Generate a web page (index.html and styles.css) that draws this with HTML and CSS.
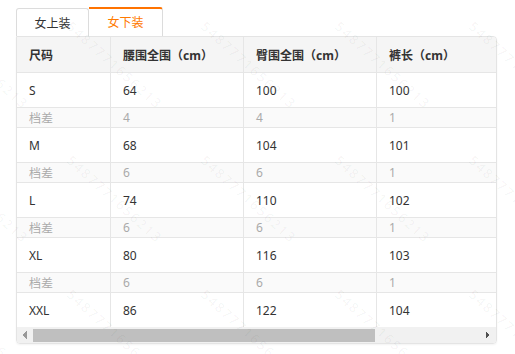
FILE: index.html
```html
<!DOCTYPE html>
<html lang="zh-CN">
<head>
<meta charset="utf-8">
<title>尺码表</title>
<link rel="stylesheet" href="styles.css">
</head>
<body>
<div class="page">
  <div class="tabs">
    <div class="tab">女上装</div>
    <div class="tab active">女下装</div>
  </div>
  <div class="panel">
    <div class="scroll">
      <table class="size-table">
        <colgroup>
          <col class="c-size">
          <col class="c-val">
          <col class="c-val">
          <col class="c-val">
          <col class="c-val">
        </colgroup>
        <thead>
          <tr><th>尺码</th><th>腰围全围（cm）</th><th>臀围全围（cm）</th><th>裤长（cm）</th><th></th></tr>
        </thead>
        <tbody>
          <tr class="row"><td>S</td><td>64</td><td>100</td><td>100</td><td></td></tr>
          <tr class="diff"><td>档差</td><td>4</td><td>4</td><td>1</td><td></td></tr>
          <tr class="row"><td>M</td><td>68</td><td>104</td><td>101</td><td></td></tr>
          <tr class="diff"><td>档差</td><td>6</td><td>6</td><td>1</td><td></td></tr>
          <tr class="row"><td>L</td><td>74</td><td>110</td><td>102</td><td></td></tr>
          <tr class="diff"><td>档差</td><td>6</td><td>6</td><td>1</td><td></td></tr>
          <tr class="row"><td>XL</td><td>80</td><td>116</td><td>103</td><td></td></tr>
          <tr class="diff"><td>档差</td><td>6</td><td>6</td><td>1</td><td></td></tr>
          <tr class="row last"><td>XXL</td><td>86</td><td>122</td><td>104</td><td></td></tr>
        </tbody>
      </table>
    </div>
    <div class="hscroll">
      <div class="sb-btn"><span class="arrow-left"></span></div>
      <div class="sb-track"><div class="sb-thumb"></div></div>
      <div class="sb-btn"><span class="arrow-right"></span></div>
    </div>
  </div>
</div>
<div class="watermarks" aria-hidden="true">
  <span class="wm" style="left:-65px;top:18px">5487771656213</span>
  <span class="wm" style="left:69px;top:18px">5487771656213</span>
  <span class="wm" style="left:203px;top:18px">5487771656213</span>
  <span class="wm" style="left:337px;top:18px">5487771656213</span>
  <span class="wm" style="left:471px;top:18px">5487771656213</span>
  <span class="wm" style="left:-65px;top:152px">5487771656213</span>
  <span class="wm" style="left:69px;top:152px">5487771656213</span>
  <span class="wm" style="left:203px;top:152px">5487771656213</span>
  <span class="wm" style="left:337px;top:152px">5487771656213</span>
  <span class="wm" style="left:471px;top:152px">5487771656213</span>
  <span class="wm" style="left:-65px;top:286px">5487771656213</span>
  <span class="wm" style="left:69px;top:286px">5487771656213</span>
  <span class="wm" style="left:203px;top:286px">5487771656213</span>
  <span class="wm" style="left:337px;top:286px">5487771656213</span>
  <span class="wm" style="left:471px;top:286px">5487771656213</span>
</div>
</body>
</html>
```
FILE: styles.css
```css
html, body {
  margin: 0;
  padding: 0;
  background: #fff;
}
body {
  font-family: "Noto Sans", "Noto Sans CJK SC", sans-serif;
  font-size: 12px;
  color: #333;
  position: relative;
  overflow: hidden;
  height: 354px;
}
.page {
  padding: 7px 0 0 16px;
}
.tabs {
  display: flex;
  align-items: flex-end;
}
.tab {
  box-sizing: border-box;
  height: 28px;
  width: 73px;
  border: 1px solid #dcdcdc;
  border-bottom: 0;
  border-radius: 3px 3px 0 0;
  display: flex;
  align-items: center;
  justify-content: center;
  color: #333;
  background: #fff;
}
.tab.active {
  height: 29px;
  width: 74px;
  border-left: 0;
  border-top: 2px solid #ff7300;
  border-radius: 0 3px 0 0;
  color: #ff7a00;
  padding-bottom: 1px;
}
.panel {
  box-sizing: border-box;
  width: 481px;
  border: 1px solid #e4e4e4;
  border-radius: 0 4px 4px 4px;
  overflow: hidden;
  box-shadow: 0 1px 2px rgba(0,0,0,0.05);
}
.scroll {
  overflow: hidden;
}
.size-table {
  border-collapse: separate;
  border-spacing: 0;
  table-layout: fixed;
  width: 626px;
}
.c-size { width: 94px; }
.c-val { width: 133px; }
.size-table th,
.size-table td {
  box-sizing: border-box;
  text-align: left;
  padding: 0 0 0 12px;
  border-right: 1px solid #e6e6e6;
  border-bottom: 1px solid #e6e6e6;
  white-space: nowrap;
  overflow: hidden;
}
.size-table th {
  height: 36px;
  background: #f5f5f5;
  font-weight: bold;
  color: #333;
}
.size-table .row td {
  height: 35px;
  background: #fff;
  color: #333;
}
.size-table .diff td {
  height: 20px;
  background: #fafafa;
  color: #aaa;
}
.size-table .last td {
  height: 34px;
  border-bottom: 0;
}
.hscroll {
  display: flex;
  height: 16px;
  background: #f1f1f1;
}
.sb-btn {
  width: 16px;
  flex: none;
  display: flex;
  align-items: center;
  justify-content: center;
}
.sb-track {
  flex: 1;
  padding-top: 2px;
}
.sb-thumb {
  width: 342px;
  height: 13px;
  background: #bfbfbf;
}
.arrow-left,
.arrow-right {
  display: block;
  width: 4px;
  height: 8px;
}
.arrow-left {
  background:
    linear-gradient(to top left, #999 50%, transparent 50%) top / 4px 4px no-repeat,
    linear-gradient(to bottom left, #999 50%, transparent 50%) bottom / 4px 4px no-repeat;
}
.arrow-right {
  background:
    linear-gradient(to top right, #505050 50%, transparent 50%) top / 4px 4px no-repeat,
    linear-gradient(to bottom right, #505050 50%, transparent 50%) bottom / 4px 4px no-repeat;
}
.watermarks {
  position: absolute;
  left: 0;
  top: 0;
  width: 515px;
  height: 354px;
  overflow: hidden;
  pointer-events: none;
}
.wm {
  position: absolute;
  font-family: "Noto Sans", sans-serif;
  font-size: 13px;
  line-height: 13px;
  letter-spacing: 2px;
  color: rgba(0,0,0,0.055);
  white-space: nowrap;
  transform-origin: 0 50%;
  transform: rotate(42deg);
}
```
